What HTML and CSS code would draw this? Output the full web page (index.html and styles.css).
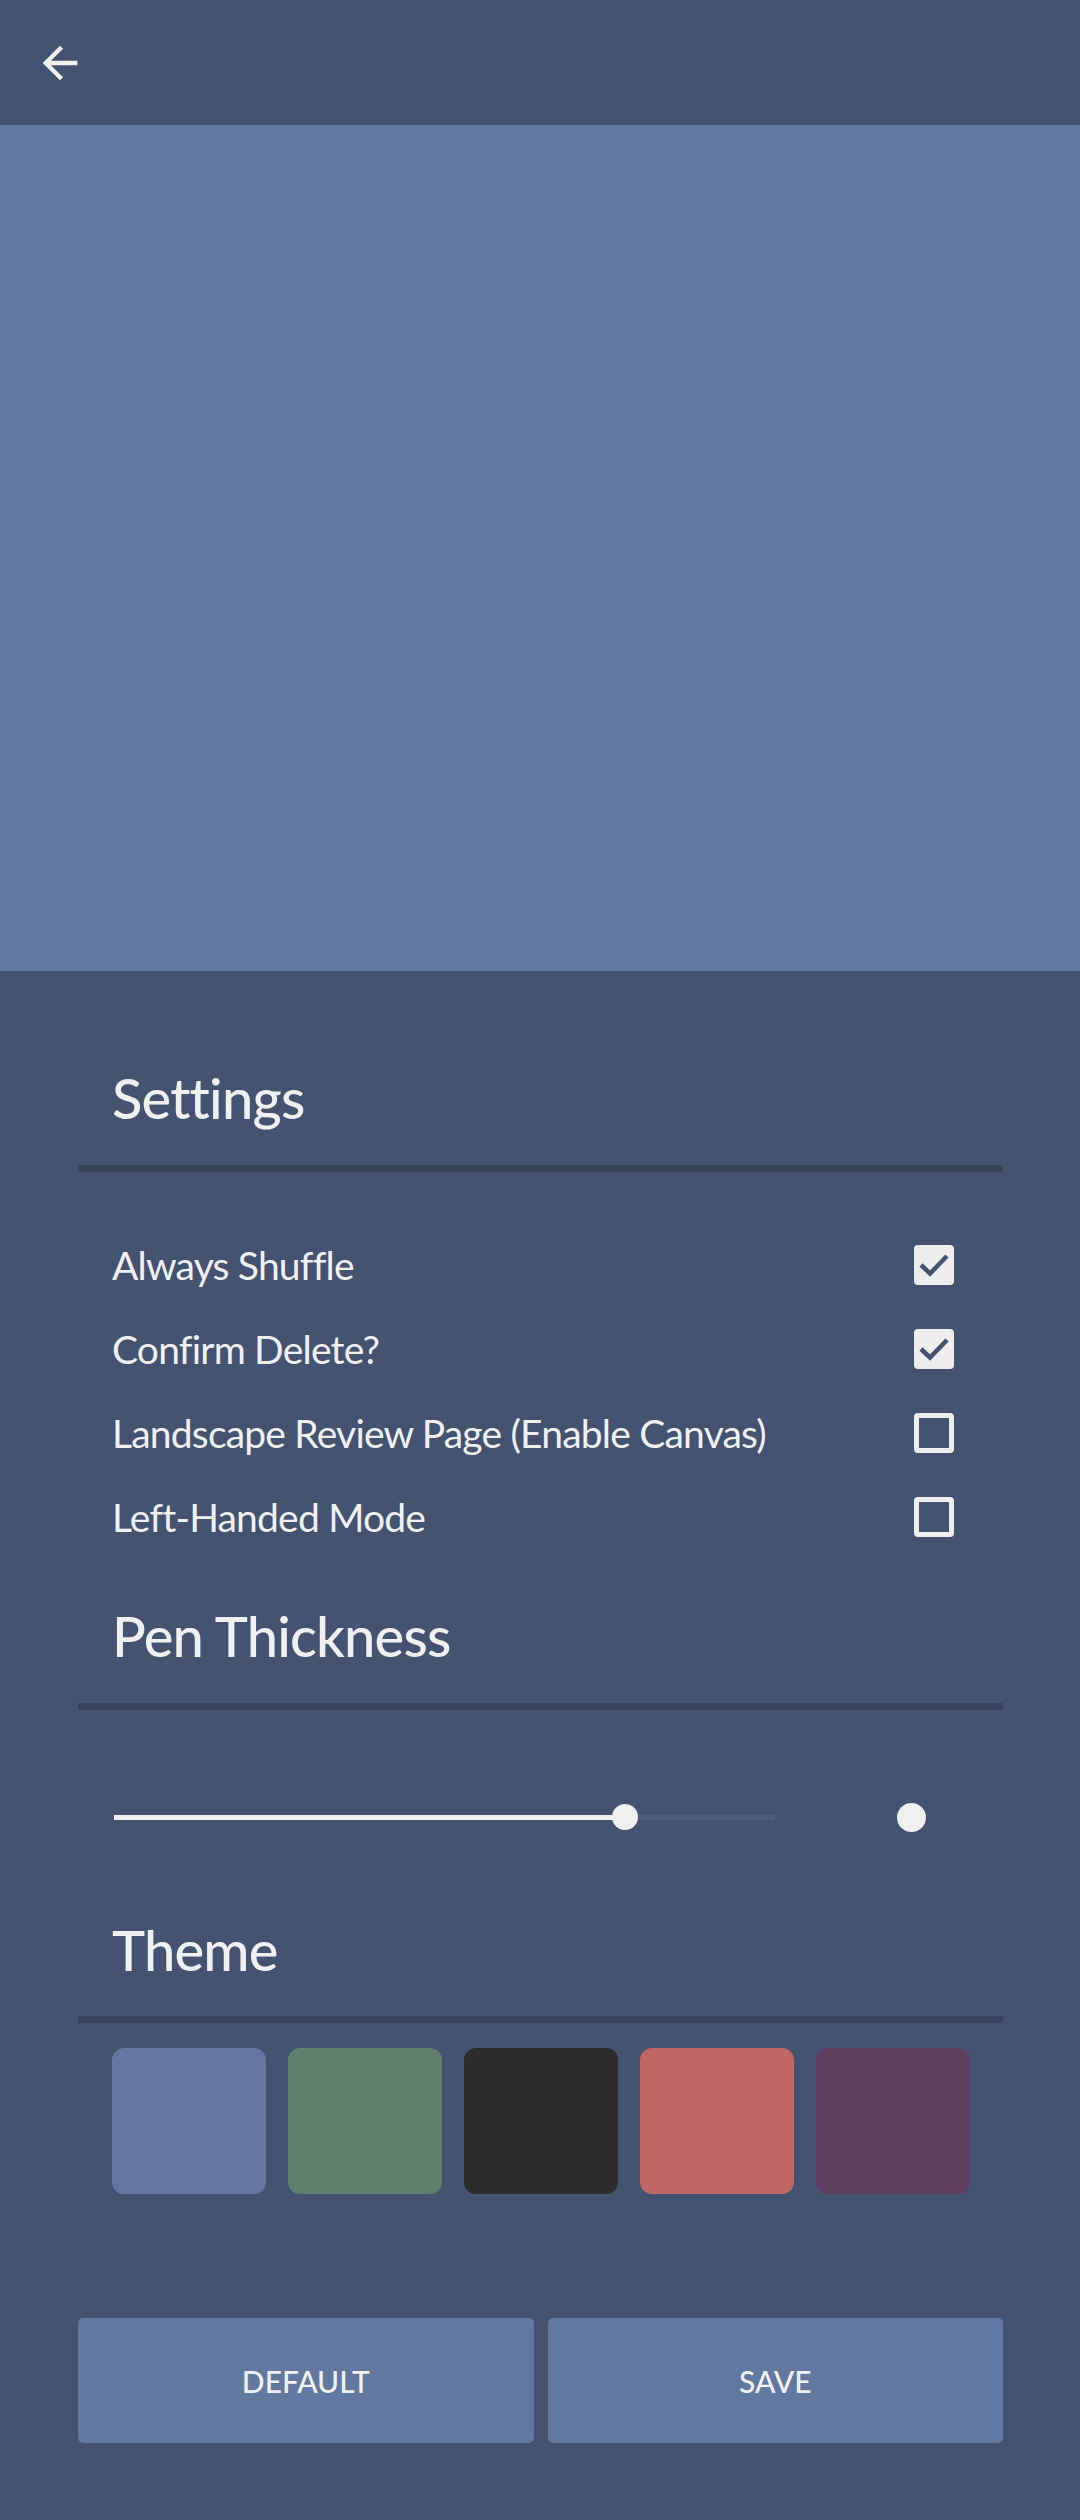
FILE: index.html
```html
<!DOCTYPE html>
<html lang="en">
<head>
<meta charset="utf-8">
<title>Settings</title>
<link rel="stylesheet" href="styles.css">
</head>
<body>
<div class="app">
  <header class="topbar">
    <svg class="back" viewBox="0 0 24 24" width="52" height="52" aria-label="Back">
      <path d="M20 11H7.83l5.59-5.59L12 4l-8 8 8 8 1.41-1.41L7.83 13H20v-2z" fill="#f0f0f0"/>
    </svg>
  </header>
  <div class="canvas"></div>
  <main class="panel">
    <h2 class="heading first">Settings</h2>
    <div class="divider"></div>
    <ul class="options">
      <li class="option"><span class="label">Always Shuffle</span><span class="box checked"><svg viewBox="0 0 40 40" width="40" height="40"><polyline points="7,20 16,28.5 33,11" fill="none" stroke="#435371" stroke-width="4.5" stroke-linejoin="miter" stroke-linecap="butt"/></svg></span></li>
      <li class="option"><span class="label">Confirm Delete?</span><span class="box checked"><svg viewBox="0 0 40 40" width="40" height="40"><polyline points="7,20 16,28.5 33,11" fill="none" stroke="#435371" stroke-width="4.5" stroke-linejoin="miter" stroke-linecap="butt"/></svg></span></li>
      <li class="option"><span class="label">Landscape Review Page (Enable Canvas)</span><span class="box"></span></li>
      <li class="option"><span class="label">Left-Handed Mode</span><span class="box"></span></li>
    </ul>
    <h2 class="heading">Pen Thickness</h2>
    <div class="divider"></div>
    <div class="slider-row">
      <div class="slider">
        <div class="track-active" style="width: 77.3%"></div>
        <div class="track-rest"></div>
        <div class="thumb" style="left: 77.3%"></div>
      </div>
      <div class="preview-dot"></div>
    </div>
    <h2 class="heading theme-head">Theme</h2>
    <div class="divider"></div>
    <div class="swatches">
      <div class="swatch blue"></div>
      <div class="swatch green"></div>
      <div class="swatch dark"></div>
      <div class="swatch red"></div>
      <div class="swatch purple"></div>
    </div>
    <div class="buttons">
      <button class="btn">DEFAULT</button>
      <button class="btn">SAVE</button>
    </div>
  </main>
</div>
</body>
</html>
```

FILE: styles.css
```css
* { box-sizing: border-box; }
html, body {
  margin: 0;
  padding: 0;
  background: #435371;
}
body {
  width: 1080px;
  height: 2520px;
  font-family: Lato, "Noto Sans", sans-serif;
  color: #f0f0f0;
  overflow: hidden;
}
.app {
  display: flex;
  flex-direction: column;
}
.topbar {
  height: 125px;
  display: flex;
  align-items: center;
  padding-left: 34px;
  background: #435371;
}
.back { display: block; }
.canvas {
  height: 846px;
  background: #6077a0;
}
.panel {
  padding: 0 77px 0 78px;
  display: flex;
  flex-direction: column;
}
.heading {
  margin: 37px 0 27px;
  padding-left: 34px;
  font-size: 56px;
  line-height: 80px;
  font-weight: 500;
  letter-spacing: -0.8px;
  color: #f0f0f0;
}
.heading.first { margin-top: 87px; }
.heading.theme-head { margin-top: 63px; margin-bottom: 26px; }
.divider {
  height: 7px;
  background: #36435b;
}
.options {
  list-style: none;
  margin: 51px 0 0;
  padding: 0 49px 0 34px;
}
.option {
  height: 84px;
  display: flex;
  align-items: center;
  justify-content: space-between;
}
.label {
  font-size: 39px;
  line-height: 84px;
  letter-spacing: -0.8px;
}
.box {
  width: 40px;
  height: 40px;
  border: 5px solid #eeeeee;
  border-radius: 4px;
  display: block;
}
.box.checked {
  border: none;
  background: #eeeeee;
}
.box svg { display: block; }
.slider-row {
  margin-top: 77px;
  height: 60px;
  display: flex;
  align-items: center;
  padding-left: 36px;
}
.slider {
  position: relative;
  width: 661px;
  height: 26px;
  display: flex;
  align-items: center;
}
.track-active {
  height: 5px;
  background: #f0f0f0;
}
.track-rest {
  flex: 1;
  height: 5px;
  background: #4b5d80;
}
.thumb {
  position: absolute;
  top: 0;
  width: 26px;
  height: 26px;
  margin-left: -13px;
  border-radius: 50%;
  background: #f0f0f0;
}
.preview-dot {
  width: 29px;
  height: 29px;
  border-radius: 50%;
  background: #f0f0f0;
  margin-left: 122px;
}
.swatches {
  margin-top: 25px;
  padding-left: 34px;
  display: flex;
  gap: 22px;
}
.swatch {
  width: 154px;
  height: 146px;
  border-radius: 12px;
}
.swatch.blue { background: #6278a1; }
.swatch.green { background: #60806e; }
.swatch.dark { background: #2c2c2c; }
.swatch.red { background: #c06663; }
.swatch.purple { background: #5f3e5f; }
.buttons {
  margin-top: 124px;
  display: flex;
  gap: 14px;
}
.btn {
  flex: 1;
  height: 125px;
  border: none;
  border-radius: 5px;
  background: #6178a1;
  color: #f0f0f0;
  font-family: Lato, "Noto Sans", sans-serif;
  font-size: 30px;
  font-weight: 500;
  letter-spacing: 0;
  padding: 0;
}
```
